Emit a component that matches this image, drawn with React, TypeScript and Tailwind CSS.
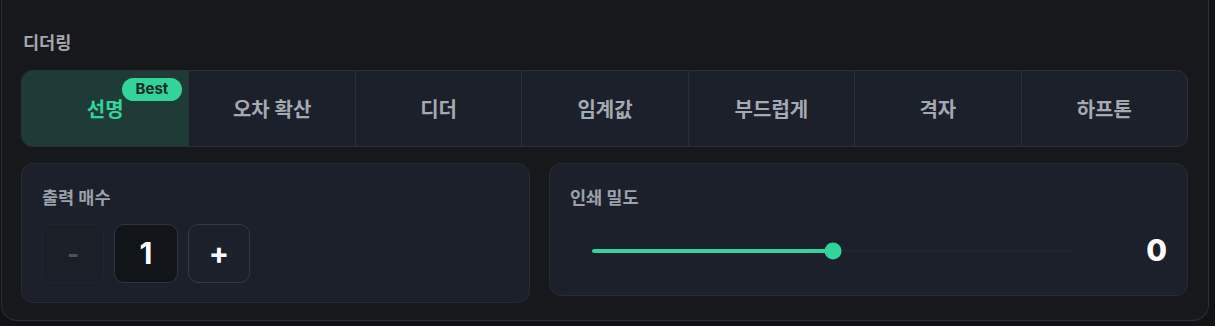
import React, { useState } from "react";

const modes = ["선명", "오차 확산", "디더", "임계값", "부드럽게", "격자", "하프톤"];

const App = () => {
  const [active, setActive] = useState(0);
  const [copies, setCopies] = useState(1);
  const density = 50;

  return (
    <div className="min-h-[326px] w-[1215px] bg-[#111214] font-[Inter,'Noto_Sans_CJK_KR',sans-serif]">
      <div className="ml-px w-[1208px] h-[321px] rounded-b-2xl border border-t-0 border-[#2a2d33] bg-[#17181c] pl-[19px] pr-5 pt-[31px]">
        {/* Dithering mode */}
        <h3 className="ml-[2px] text-[17.5px] leading-6 font-bold text-[#a3a7ae]">디더링</h3>

        <div className="mt-[15px] grid h-[77px] grid-cols-7 overflow-hidden rounded-[11px] border border-[#2a2f38] bg-[#1b202a]">
          {modes.map((m, i) => (
            <button
              key={m}
              onClick={() => setActive(i)}
              className={`relative flex items-center justify-center pt-[3px] text-[20px] font-bold ${
                i > 0 ? "border-l border-[#2a2f38]" : ""
              } ${i === active ? "bg-[#1f3b38] text-[#34d399]" : "text-[#a4aab3]"}`}
            >
              {m}
              {i === 0 && (
                <span className="absolute left-[100px] top-[7px] flex h-[23px] w-[60px] items-center justify-center rounded-full bg-[#34d399] text-[15px] font-bold text-[#0f2a20]">
                  Best
                </span>
              )}
            </button>
          ))}
        </div>

        <div className="mt-4 flex items-start gap-[19px]">
          {/* Copies */}
          <div className="h-[140px] w-[509px] rounded-xl border border-[#262b35] bg-[#1b202a] px-5 pt-[22px]">
            <div className="text-[17.5px] leading-6 font-bold text-[#9ca1aa]">출력 매수</div>
            <div className="mt-[14px] flex gap-[10px]">
              <button
                onClick={() => setCopies(Math.max(1, copies - 1))}
                className="flex h-[59px] w-[62px] items-center justify-center rounded-[10px] border border-[#20252e] bg-[#1a1f28] text-[26px] font-bold text-[#4b5260]"
              >
                -
              </button>
              <div className="flex h-[59px] w-[64px] items-center justify-center rounded-[10px] border border-[#2f3540] bg-[#111418] text-[30px] font-bold text-white">
                {copies}
              </div>
              <button
                onClick={() => setCopies(copies + 1)}
                className="flex h-[59px] w-[62px] items-center justify-center rounded-[10px] border border-[#343a45] bg-[#1b202a] text-[30px] font-bold text-white"
              >
                +
              </button>
            </div>
          </div>

          {/* Print density */}
          <div className="h-[133px] flex-1 rounded-xl border border-[#262b35] bg-[#1b202a] px-5 pt-[22px]">
            <div className="text-[17.5px] leading-6 font-bold text-[#9ca1aa]">인쇄 밀도</div>
            <div className="mt-[18px] flex items-center">
              <div className="relative ml-[22px] h-[4px] w-[481px] rounded-full bg-[#1e2430]">
                <div className="h-full rounded-full bg-[#34d399]" style={{ width: `${density}%` }} />
                <div
                  className="absolute top-1/2 h-[17px] w-[17px] -translate-x-1/2 -translate-y-1/2 rounded-full bg-[#34d399]"
                  style={{ left: `${density}%` }}
                />
              </div>
              <div className="flex-1 text-right text-[30px] font-extrabold text-white">0</div>
            </div>
          </div>
        </div>
      </div>
    </div>
  );
};

export default App;
